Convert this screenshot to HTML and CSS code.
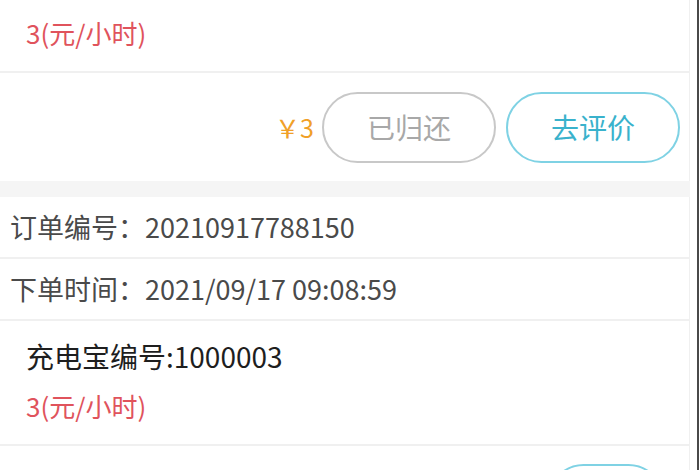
FILE: index.html
```html
<!DOCTYPE html>
<html lang="zh-CN">
<head>
    <meta charset="UTF-8">
    <meta name="viewport" content="width=device-width, initial-scale=1.0">
    <title>我的订单</title>
    <link rel="stylesheet" href="styles.css">
</head>
<body>
    <div class="screen">
        <div class="page">
            <!-- 第一个订单（上半部分已滚出屏幕） -->
            <div class="order order-first">
                <div class="goods">
                    <p class="goods-name">充电宝编号:1000002</p>
                    <p class="goods-price">3(元/小时)</p>
                </div>
                <div class="order-actions">
                    <span class="amount">￥3</span>
                    <button class="btn btn-done">已归还</button>
                    <button class="btn btn-comment">去评价</button>
                </div>
            </div>

            <div class="order">
                <div class="info-row">订单编号：20210917788150</div>
                <div class="info-row">下单时间：2021/09/17 09:08:59</div>
                <div class="goods">
                    <p class="goods-name">充电宝编号:1000003</p>
                    <p class="goods-price">3(元/小时)</p>
                </div>
                <div class="order-actions">
                    <button class="btn btn-comment btn-small">去支付</button>
                </div>
            </div>
        </div>
    </div>
</body>
</html>
```

FILE: styles.css
```css
* {
    margin: 0;
    padding: 0;
    box-sizing: border-box;
}

html, body {
    height: 100%;
    overflow: hidden;
}

body {
    font-family: "Noto Sans CJK SC", "Noto Sans", sans-serif;
    background: #fff;
}

.screen {
    width: 699px;
    height: 470px;
    padding-right: 7px;
    border-right: 2px solid #4a4a4a;
    overflow: hidden;
}

.page {
    width: 690px;
    border-right: 1px solid #f0f0f0;
    min-height: 470px;
}

.order {
    background: #fff;
}

/* 第一个订单只露出底部 */
.order-first {
    margin-top: -52px;
}

.order-first::after {
    content: "";
    display: block;
    height: 16px;
    background: #f5f5f5;
    margin-right: -1px;
}

.info-row {
    height: 62px;
    line-height: 60px;
    padding-left: 10px;
    font-size: 27px;
    color: #4a4a4a;
    border-bottom: 2px solid #f0f0f0;
}

.goods {
    padding: 10px 26px 13px;
    border-bottom: 2px solid #f0f0f0;
}

.goods-name {
    line-height: 50px;
    font-size: 28px;
    color: #1e1e1e;
}

.goods-price {
    line-height: 50px;
    font-size: 26px;
    color: #e0535c;
}

.order-actions {
    height: 108px;
    display: flex;
    align-items: center;
    justify-content: flex-end;
    gap: 10px;
    padding-right: 9px;
}

.amount {
    font-size: 25px;
    color: #f0a028;
    margin-right: -2px;
}

.btn {
    width: 174px;
    height: 71px;
    border-radius: 36px;
    background: #fff;
    font-family: inherit;
    font-size: 28px;
    cursor: pointer;
}

.btn-done {
    border: 2px solid #c8c8c8;
    color: #a8a8a8;
}

.btn-comment {
    border: 2px solid #7fd2e4;
    color: #39b2cc;
}

.btn-small {
    width: 116px;
    margin-right: 16px;
    align-self: flex-start;
    margin-top: 18px;
}
```
